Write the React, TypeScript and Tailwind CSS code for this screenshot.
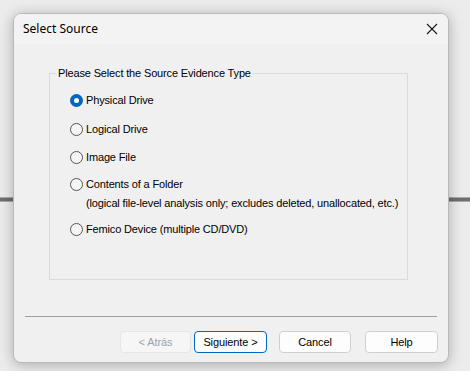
import React from 'react';

const options = [
  { label: 'Physical Drive', checked: true, gap: 'mt-0' },
  { label: 'Logical Drive', gap: 'mt-[15px]' },
  { label: 'Image File', gap: 'mt-[14px]' },
  {
    label: 'Contents of a Folder',
    gap: 'mt-[13px]',
    note: '(logical file-level analysis only; excludes deleted, unallocated, etc.)',
  },
  { label: 'Femico Device (multiple CD/DVD)', gap: 'mt-[12px]' },
];

const Radio: React.FC<{ checked?: boolean }> = ({ checked }) =>
  checked ? (
    <span className="flex items-center justify-center w-[13px] h-[13px] rounded-full bg-[#0067c0]">
      <span className="w-[5px] h-[5px] rounded-full bg-white" />
    </span>
  ) : (
    <span className="w-[13px] h-[13px] rounded-full border border-[#555555] bg-[#f5f5f5]" />
  );

export default function App() {
  return (
    <div
      className="relative w-[470px] h-[371px] bg-[#ececec] overflow-hidden pt-[13px] pl-[13px]"
      style={{ fontFamily: '"Liberation Sans", Arial, sans-serif' }}
    >
      {/* window edge behind the dialog */}
      <div className="absolute left-0 right-0 top-[197px] h-[5px] bg-[#6f6f6f] border-y border-[#a8a8a8]" />

      <div className="relative w-[436px] h-[350px] rounded-[8px] border border-[#b9b9b9] bg-[#f0f0f0] shadow-[0_2px_14px_rgba(0,0,0,0.28)] flex flex-col overflow-hidden">
        <div className="h-[30px] bg-[#f3f3f3] flex items-center justify-between pl-[9px] pr-[9px]">
          <span className="text-[12px] text-black" style={{ fontFamily: '"Segoe UI", "Noto Sans", sans-serif' }}>
            Select Source
          </span>
          <svg width="12" height="12" viewBox="0 0 12 12" className="mr-[1px]">
            <path d="M1 1 L11 11 M11 1 L1 11" stroke="#1a1a1a" strokeWidth="1.1" />
          </svg>
        </div>

        <div className="flex-1 flex flex-col text-[11px] tracking-[-0.15px] text-black whitespace-nowrap">
          <div className="relative ml-[35px] mt-[29px] w-[359px] h-[207px] border border-[#dadada]">
            <span className="absolute -top-[8px] left-[6px] bg-[#f0f0f0] px-[2px] leading-[14px]">
              Please Select the Source Evidence Type
            </span>
            <div className="flex flex-col pt-[19px] pl-[20px]">
              {options.map((o) => (
                <div key={o.label} className={`flex flex-col ${o.gap}`}>
                  <div className="flex items-center h-[14px] gap-[3px]">
                    <Radio checked={o.checked} />
                    <span>{o.label}</span>
                  </div>
                  {o.note && (
                    <span className="mt-[5px] ml-[16px] leading-[14px]">{o.note}</span>
                  )}
                </div>
              ))}
            </div>
          </div>

          <div className="mt-[36px] mx-[11px] border-t border-[#a0a0a0]" />

          <div className="flex justify-end mt-[14px] mr-[10px] text-[11px] tracking-[-0.1px]">
            <button className="w-[71px] h-[22px] rounded-[4px] border border-[#e6e6e6] bg-[#f6f6f6] text-[#a2a2a2] mr-[3px]">
              &lt; Atrás
            </button>
            <button className="w-[73px] h-[22px] rounded-[4px] border border-[#0067c0] bg-[#fdfdfd] mr-[12px]">
              Siguiente &gt;
            </button>
            <button className="w-[72px] h-[22px] rounded-[4px] border border-[#cfcfcf] bg-[#fdfdfd] mr-[14px]">
              Cancel
            </button>
            <button className="w-[73px] h-[22px] rounded-[4px] border border-[#cfcfcf] bg-[#fdfdfd]">
              Help
            </button>
          </div>
        </div>
      </div>
    </div>
  );
}
